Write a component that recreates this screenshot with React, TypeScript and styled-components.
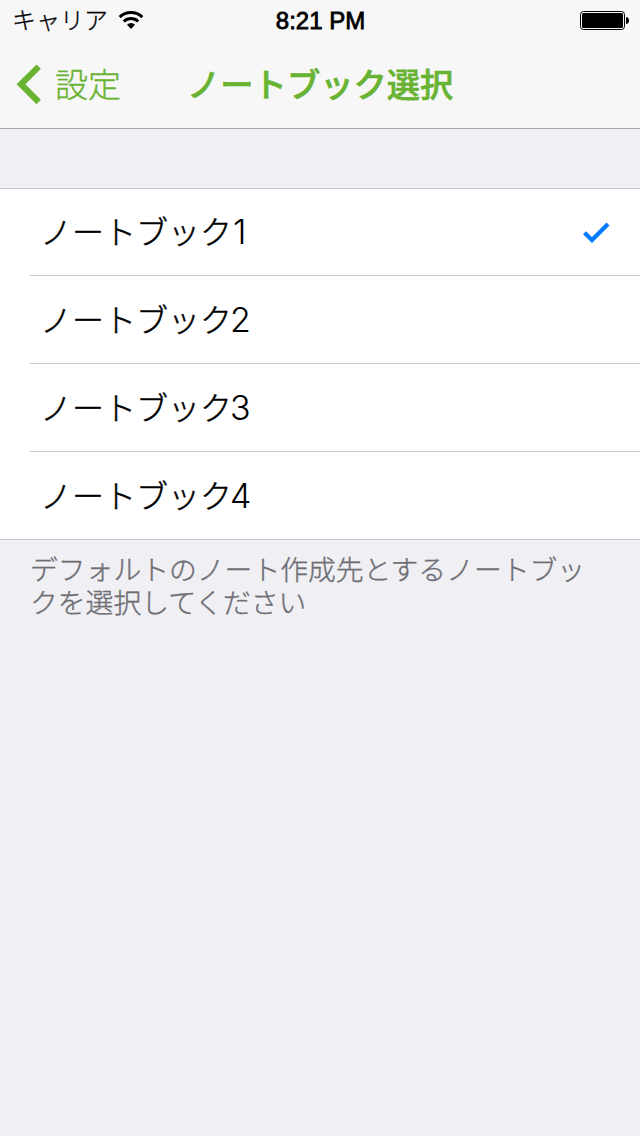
import React from 'react';
import styled, { createGlobalStyle } from 'styled-components';

const GlobalStyle = createGlobalStyle`
  * { box-sizing: border-box; }
  body {
    margin: 0;
    background: #efeff4;
    font-family: 'Noto Sans CJK JP', sans-serif;
    color: #000;
  }
`;

const Screen = styled.div`
  width: 640px;
  height: 1136px;
  background: #efeff4;
  overflow: hidden;
`;

const Header = styled.header`
  height: 129px;
  background: #f7f7f7;
  border-bottom: 1px solid #a9a9ac;
`;

const StatusBar = styled.div`
  display: grid;
  grid-template-columns: 1fr auto 1fr;
  align-items: center;
  height: 40px;
  padding: 0 11px 0 12px;
`;

const Carrier = styled.div`
  display: flex;
  align-items: center;
  gap: 10px;
  height: 40px;
  font-size: 24px;
  font-weight: 300;
  -webkit-text-stroke: 0.3px currentColor;
`;

const CarrierName = styled.span`
  width: 96px;
  line-height: 36px;
  padding-bottom: 4px;
  white-space: nowrap;
`;

const Clock = styled.time`
  font: 400 24px/40px 'Liberation Sans', sans-serif;
  -webkit-text-stroke: 0.8px #000;
  padding-top: 1px;
`;

const Battery = styled.svg`
  justify-self: end;
`;

const NavBar = styled.nav`
  display: grid;
  grid-template-columns: 188px 1fr 188px;
  align-items: center;
  height: 88px;
  color: #69b332;
`;

const BackButton = styled.a`
  display: flex;
  align-items: center;
  gap: 13px;
  padding-left: 16px;
  font-size: 33px;
  font-weight: 300;
  -webkit-text-stroke: 0.35px currentColor;
`;

const BackLabel = styled.span`
  line-height: 84px;
  padding-bottom: 3px;
`;

const Title = styled.h1`
  margin: 0 0 0 -1px;
  padding-bottom: 3px;
  font-size: 33.3px;
  font-weight: 500;
  -webkit-text-stroke: 0.6px currentColor;
  line-height: 84px;
  white-space: nowrap;
`;

const List = styled.ul`
  list-style: none;
  margin: 59px 0 0;
  padding: 0;
  background: #fff;
  border-top: 1px solid #c8c7cc;
  border-bottom: 1px solid #c8c7cc;
`;

const Row = styled.li<{ $first?: boolean }>`
  display: flex;
  align-items: center;
  justify-content: space-between;
  height: ${({ $first }) => ($first ? 86 : 88)}px;
  margin-left: 30px;
  padding: 0 30px 0 10px;
  border-top: ${({ $first }) => ($first ? 'none' : '1px solid #c8c7cc')};
`;

const RowLabel = styled.span`
  padding-bottom: 4px;
  font-size: 32px;
  font-weight: 300;
  -webkit-text-stroke: 0.5px currentColor;
`;

const Digit = styled.span<{ $narrow?: boolean }>`
  font-family: Inter, sans-serif;
  font-size: 34px;
  font-weight: 300;
  margin-left: ${({ $narrow }) => ($narrow ? 1 : -2)}px;
  -webkit-text-stroke: 0;
`;

const Footnote = styled.p`
  margin: 12px 30px 0;
  font-size: 27.8px;
  font-weight: 300;
  -webkit-text-stroke: 0.35px currentColor;
  line-height: 33px;
  color: #6d6d72;
`;

const notebooks = [1, 2, 3, 4];

const WifiIcon = () => (
  <svg width="26" height="22" viewBox="0 0 26 22" fill="none" stroke="#000">
    <path d="M1.7 7.1a16.2 16.2 0 0 1 22.6 0" strokeWidth="3" />
    <path d="M5.8 11.4a10.4 10.4 0 0 1 14.4 0" strokeWidth="2.8" />
    <path d="M13 19l-4-4.3a5.8 5.8 0 0 1 8 0z" fill="#000" stroke="none" />
  </svg>
);

export default function App() {
  return (
    <Screen>
      <GlobalStyle />
      <Header>
        <StatusBar>
          <Carrier>
            <CarrierName>キャリア</CarrierName>
            <WifiIcon />
          </Carrier>
          <Clock>8:21 PM</Clock>
          <Battery width="49" height="20" viewBox="0 0 49 20">
            <rect x="0.5" y="0.5" width="44" height="18" rx="3" fill="none" stroke="#000" />
            <rect x="2" y="2" width="41" height="15" rx="1.5" />
            <path d="M46 6c1.8 0 3 1.5 3 3.5S47.8 13 46 13z" />
          </Battery>
        </StatusBar>
        <NavBar>
          <BackButton>
            <svg width="26" height="42" viewBox="0 0 26 42" fill="none" stroke="currentColor">
              <path d="M22.7 3.6L5 21.3 22.7 39" strokeWidth="6.2" />
            </svg>
            <BackLabel>設定</BackLabel>
          </BackButton>
          <Title>ノートブック選択</Title>
        </NavBar>
      </Header>
      <List>
        {notebooks.map((n, i) => (
          <Row key={n} $first={i === 0}>
            <RowLabel>
              ノートブック<Digit $narrow={n === 1}>{n}</Digit>
            </RowLabel>
            {i === 0 && (
              <svg width="27" height="21" viewBox="0 0 27 21" fill="none" stroke="#007aff">
                <path d="M1.5 10.8L9 18 25 2.100" strokeWidth="4.2" />
              </svg>
            )}
          </Row>
        ))}
      </List>
      <Footnote>デフォルトのノート作成先とするノートブックを選択してください</Footnote>
    </Screen>
  );
}
